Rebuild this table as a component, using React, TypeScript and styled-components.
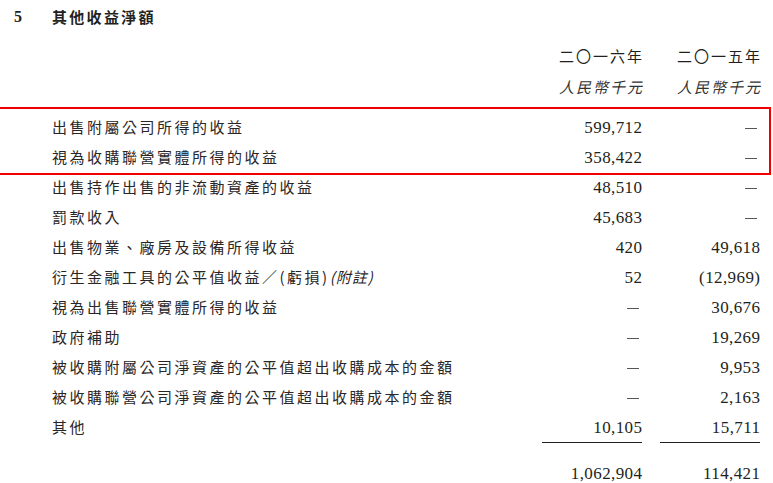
import { FC } from "react";
import styled, { createGlobalStyle } from "styled-components";

const GlobalStyle = createGlobalStyle`
    body {
        margin: 0px;
        background: #ffffff;
        color: #231f20;
        font-family: "Noto Sans CJK TC", "Noto Sans", sans-serif;
    }
`;

const Page = styled.div`
    padding: 7px 13px 0px 14px;
`;

const TitleRow = styled.div`
    display: flex;
    align-items: center;
    height: 20px;
`;

const NoteNumber = styled.span`
    width: 38px;
    font-family: "Liberation Serif", serif;
    font-weight: bold;
    font-size: 16px;
`;

const Title = styled.h3`
    margin: 0px;
    padding-bottom: 2px;
    font-size: 15px;
    font-weight: 700;
    letter-spacing: 2.3px;
`;

const Row = styled.div<{ height?: number }>`
    display: grid;
    grid-template-columns: 1fr 100px 100px;
    column-gap: 18px;
    align-items: center;
    height: ${props => props.height || 30}px;
    padding-left: 38px;
`;

const HeadRow = styled(Row)`
    margin-top: 15px;
`;

const UnitRow = styled(Row)`
    margin-top: 1px;
`;

const Label = styled.span`
    font-size: 15px;
    letter-spacing: 2.5px;
    white-space: nowrap;
    color: #2a2627;
    padding-bottom: 4px;
`;

const HeadCell = styled.span<{ italic?: boolean }>`
    text-align: right;
    font-size: 15px;
    letter-spacing: 2px;
    margin-right: -2px;
    padding-bottom: 3px;
    ${props => props.italic && `font-style: italic; color: #333; padding-bottom: 4px;`}
`;

const Amount = styled.span<{ ruled?: boolean }>`
    text-align: right;
    font-family: "Liberation Serif", serif;
    font-size: 17px;
    letter-spacing: 0.4px;
    margin-right: -0.4px;
    align-self: stretch;
    display: flex;
    align-items: center;
    justify-content: flex-end;
    ${props => props.ruled && `border-bottom: 1px solid #231f20; height: 29px;`}
`;

const Dash = styled.span`
    display: inline-block;
    width: 12px;
    border-top: 1px solid #555;
    margin-right: 3px;
`;

const Highlight = styled.div`
    margin: 4px -11px -2px -17px;
    padding: 4px 9px 0px 15px;
    border: 2px solid #f00000;
`;

const TotalRow = styled(Row)`
    margin-top: 16px;
`;

type Item = { label: string, y2016: string, y2015: string };

const highlighted: Item[] = [
    { label: "出售附屬公司所得的收益", y2016: "599,712", y2015: "-" },
    { label: "視為收購聯營實體所得的收益", y2016: "358,422", y2015: "-" },
];

const items: Item[] = [
    { label: "出售持作出售的非流動資產的收益", y2016: "48,510", y2015: "-" },
    { label: "罰款收入", y2016: "45,683", y2015: "-" },
    { label: "出售物業、廠房及設備所得收益", y2016: "420", y2015: "49,618" },
    { label: "衍生金融工具的公平值收益／(虧損)", y2016: "52", y2015: "(12,969)" },
    { label: "視為出售聯營實體所得的收益", y2016: "-", y2015: "30,676" },
    { label: "政府補助", y2016: "-", y2015: "19,269" },
    { label: "被收購附屬公司淨資產的公平值超出收購成本的金額", y2016: "-", y2015: "9,953" },
    { label: "被收購聯營公司淨資產的公平值超出收購成本的金額", y2016: "-", y2015: "2,163" },
];

const Note = styled.i`
    letter-spacing: 1px;
`;

const Value: FC<{ text: string, ruled?: boolean }> = ({ text, ruled }) => (
    <Amount ruled={ruled}>{text === "-" ? <Dash /> : text}</Amount>
);

const ItemRow: FC<{ item: Item }> = ({ item }) => (
    <Row>
        <Label>
            {item.label}
            {item.label.startsWith("衍生") && <Note>(附註)</Note>}
        </Label>
        <Value text={item.y2016} />
        <Value text={item.y2015} />
    </Row>
);

const App: FC = () => {
    return (
        <Page>
            <GlobalStyle />
            <TitleRow>
                <NoteNumber>5</NoteNumber>
                <Title>其他收益淨額</Title>
            </TitleRow>
            <HeadRow>
                <span />
                <HeadCell>二〇一六年</HeadCell>
                <HeadCell>二〇一五年</HeadCell>
            </HeadRow>
            <UnitRow>
                <span />
                <HeadCell italic>人民幣千元</HeadCell>
                <HeadCell italic>人民幣千元</HeadCell>
            </UnitRow>
            <Highlight>
                {highlighted.map((item, index) => <ItemRow key={index} item={item} />)}
            </Highlight>
            {items.map((item, index) => <ItemRow key={index} item={item} />)}
            <Row>
                <Label>其他</Label>
                <Value text="10,105" ruled />
                <Value text="15,711" ruled />
            </Row>
            <TotalRow>
                <span />
                <Value text="1,062,904" />
                <Value text="114,421" />
            </TotalRow>
        </Page>
    );
}
export default App;
